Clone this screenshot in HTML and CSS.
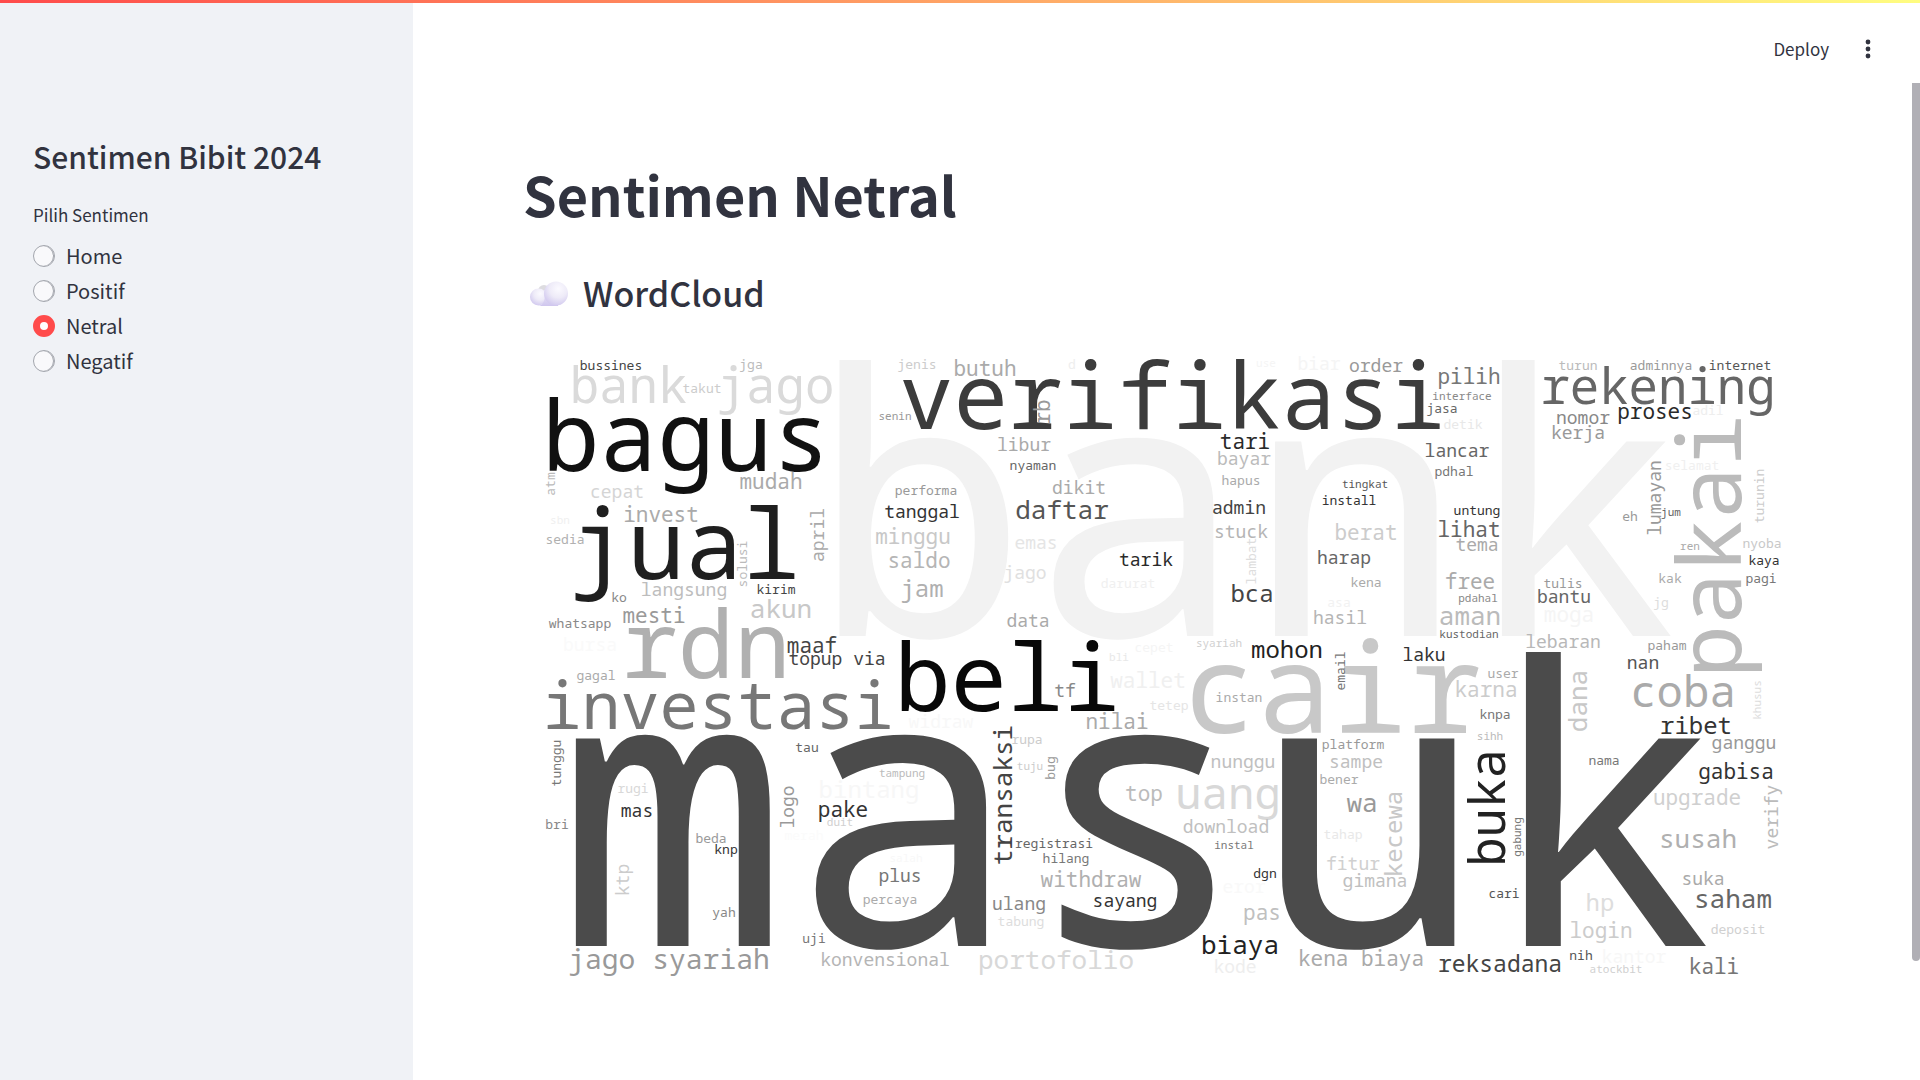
FILE: index.html
```html
<!DOCTYPE html>
<html lang="id">
<head>
<meta charset="utf-8">
<meta name="viewport" content="width=device-width, initial-scale=1">
<title>Sentimen Bibit 2024</title>
<link rel="stylesheet" href="styles.css">
</head>
<body>
<div class="decoration"></div>
<div class="app">
  <aside class="sidebar">
    <h2 class="sidebar-title">Sentimen Bibit 2024</h2>
    <fieldset class="options">
      <legend class="options-label">Pilih Sentimen</legend>
      <label class="option"><input class="radio" type="radio" name="sentimen"><span>Home</span></label>
      <label class="option"><input class="radio" type="radio" name="sentimen"><span>Positif</span></label>
      <label class="option"><input class="radio" type="radio" name="sentimen" checked><span>Netral</span></label>
      <label class="option"><input class="radio" type="radio" name="sentimen"><span>Negatif</span></label>
    </fieldset>
  </aside>
  <div class="view">
    <header class="toolbar">
      <button class="deploy" type="button">Deploy</button>
      <button class="menu" type="button" aria-label="Menu">
        <svg width="6" height="20" viewBox="0 0 6 20"><circle cx="3" cy="3" r="2.4"/><circle cx="3" cy="10" r="2.4"/><circle cx="3" cy="17" r="2.4"/></svg>
      </button>
    </header>
    <main class="content">
      <h1 class="title">Sentimen Netral</h1>
      <h3 class="subtitle">
        <svg class="cloud-icon" viewBox="0 0 38 25" aria-hidden="true">
          <defs>
            <linearGradient id="base" x1="0" y1="0" x2="0" y2="1"><stop offset="0" stop-color="#efecf8"/><stop offset="1" stop-color="#cfc6ee"/></linearGradient>
            <radialGradient id="puff" cx=".6" cy=".3" r=".75"><stop offset="0" stop-color="#fbfaff"/><stop offset=".5" stop-color="#eeebf8"/><stop offset="1" stop-color="#cfc6ee"/></radialGradient>
          </defs>
          <circle cx="14" cy="10" r="6" fill="#dddce0"/>
          <circle cx="8.5" cy="16" r="8.5" fill="url(#puff)"/>
          <path d="M14 9H28V25H9C14 24 16 17 14 9Z" fill="url(#base)"/>
          <circle cx="26" cy="12.5" r="12" fill="url(#puff)"/>
        </svg>
        <span>WordCloud</span>
      </h3>
      <svg class="wordcloud" viewBox="523 334 1287 660" role="img" aria-label="WordCloud Sentimen Netral">
        <text class="s363" x="1246" y="635" fill="#f2f2f2">bank</text>
        <text class="s387" x="1137" y="945" fill="#4b4b4b">masuk</text>
        <text class="s125" x="1332" y="732" fill="#c8c8c8">cair</text>
        <text class="s96" x="686" y="470" fill="#111">bagus</text>
        <text class="s96" x="685" y="578" fill="#1f1f1f">jual</text>
        <text class="s94" x="706" y="677" fill="#b0b0b0">rdn</text>
        <text class="s94" x="1007" y="710" fill="#080808">beli</text>
        <text class="s91" x="1172" y="428" fill="#3c3c3c">verifikasi</text>
        <text class="s88" x="1741" y="545" fill="#bbb" transform="rotate(-90 1741 545)">pakai</text>
        <text class="s65" x="718" y="728" fill="#777">investasi</text>
        <text class="s49" x="702" y="402" fill="#dadada">bank jago</text>
        <text class="s49" x="1658" y="403" fill="#666">rekening</text>
        <text class="s49" x="1505" y="807" fill="#222" transform="rotate(-90 1505 807)">buka</text>
        <text class="s44" x="1228" y="808" fill="#d8d8d8">uang</text>
        <text class="s44" x="1683" y="706" fill="#aaa">coba</text>
        <text class="s28" x="669" y="968" fill="#999">jago syariah</text>
        <text class="s13" x="611" y="369" fill="#444">bussines</text>
        <text class="s13" x="751" y="368" fill="#bbb">jga</text>
        <text class="s13" x="702" y="392" fill="#ccc">takut</text>
        <text class="s13" x="555" y="483" fill="#bbb" transform="rotate(-90 555 483)">atm</text>
        <text class="s18" x="617" y="497" fill="#d5d5d5">cepat</text>
        <text class="s21" x="771" y="488" fill="#aaa">mudah</text>
        <text class="s21" x="661" y="521" fill="#aaa">invest</text>
        <text class="s11" x="560" y="523" fill="#f0f0f0">sbn</text>
        <text class="s13" x="565" y="543" fill="#b0b0b0">sedia</text>
        <text class="s18" x="824" y="534" fill="#aaa" transform="rotate(-90 824 534)">april</text>
        <text class="s13" x="747" y="563" fill="#bbb" transform="rotate(-90 747 563)">solusi</text>
        <text class="s18" x="684" y="595" fill="#bdbdbd">langsung</text>
        <text class="s13" x="776" y="593" fill="#444">kirim</text>
        <text class="s13" x="619" y="601" fill="#888">ko</text>
        <text class="s21" x="654" y="622" fill="#999">mesti</text>
        <text class="s26" x="781" y="617" fill="#c8c8c8">akun</text>
        <text class="s13" x="580" y="627" fill="#888">whatsapp</text>
        <text class="s18" x="590" y="650" fill="#fafafa">bursa</text>
        <text class="s21" x="812" y="652" fill="#444">maaf</text>
        <text class="s18" x="837" y="664" fill="#444">topup via</text>
        <text class="s13" x="917" y="368" fill="#ccc">jenis</text>
        <text class="s21" x="985" y="375" fill="#aaa">butuh</text>
        <text class="s13" x="1072" y="368" fill="#eee">d</text>
        <text class="s11" x="895" y="419" fill="#999">senin</text>
        <text class="s21" x="1050" y="411" fill="#999" transform="rotate(-90 1050 411)">rb</text>
        <text class="s18" x="1024" y="450" fill="#aaa">libur</text>
        <text class="s13" x="1033" y="469" fill="#666">nyaman</text>
        <text class="s13" x="926" y="494" fill="#999">performa</text>
        <text class="s18" x="1079" y="493" fill="#aaa">dikit</text>
        <text class="s18" x="922" y="517" fill="#333">tanggal</text>
        <text class="s26" x="1062" y="518" fill="#555">daftar</text>
        <text class="s21" x="913" y="543" fill="#c8c8c8">minggu</text>
        <text class="s21" x="919" y="567" fill="#b5b5b5">saldo</text>
        <text class="s18" x="1036" y="548" fill="#e5e5e5">emas</text>
        <text class="s18" x="1146" y="565" fill="#2a2a2a">tarik</text>
        <text class="s24" x="922" y="596" fill="#b0b0b0">jam</text>
        <text class="s18" x="1025" y="578" fill="#e0e0e0">jago</text>
        <text class="s13" x="1128" y="587" fill="#f0f0f0">darurat</text>
        <text class="s18" x="1028" y="626" fill="#aaa">data</text>
        <text class="s13" x="1154" y="651" fill="#f5f5f5">cepet</text>
        <text class="s11" x="1119" y="660" fill="#e8e8e8">bli</text>
        <text class="s11" x="1266" y="366" fill="#f5f5f5">use</text>
        <text class="s18" x="1319" y="369" fill="#f5f5f5">biar</text>
        <text class="s18" x="1376" y="371" fill="#999">order</text>
        <text class="s21" x="1469" y="383" fill="#777">pilih</text>
        <text class="s11" x="1462" y="399" fill="#888">interface</text>
        <text class="s13" x="1442" y="412" fill="#666">jasa</text>
        <text class="s13" x="1463" y="428" fill="#e8e8e8">detik</text>
        <text class="s21" x="1245" y="448" fill="#2a2a2a">tari</text>
        <text class="s18" x="1244" y="464" fill="#bbb">bayar</text>
        <text class="s18" x="1457" y="456" fill="#666">lancar</text>
        <text class="s13" x="1241" y="484" fill="#aaa">hapus</text>
        <text class="s13" x="1454" y="475" fill="#777">pdhal</text>
        <text class="s11" x="1365" y="487" fill="#555">tingkat</text>
        <text class="s13" x="1349" y="504" fill="#333">install</text>
        <text class="s18" x="1239" y="513" fill="#444">admin</text>
        <text class="s13" x="1477" y="514" fill="#333">untung</text>
        <text class="s18" x="1241" y="537" fill="#b5b5b5">stuck</text>
        <text class="s21" x="1366" y="539" fill="#ccc">berat</text>
        <text class="s21" x="1469" y="536" fill="#666">lihat</text>
        <text class="s18" x="1477" y="550" fill="#aaa">tema</text>
        <text class="s18" x="1344" y="563" fill="#666">harap</text>
        <text class="s13" x="1256" y="560" fill="#ddd" transform="rotate(-90 1256 560)">lambat</text>
        <text class="s24" x="1252" y="601" fill="#444">bca</text>
        <text class="s13" x="1366" y="586" fill="#aaa">kena</text>
        <text class="s21" x="1470" y="588" fill="#aaa">free</text>
        <text class="s13" x="1339" y="606" fill="#f2f2f2">asa</text>
        <text class="s11" x="1478" y="601" fill="#888">pdahal</text>
        <text class="s18" x="1340" y="623" fill="#b5b5b5">hasil</text>
        <text class="s26" x="1470" y="624" fill="#bbb">aman</text>
        <text class="s11" x="1469" y="637" fill="#666">kustodian</text>
        <text class="s11" x="1219" y="646" fill="#d0d0d0">syariah</text>
        <text class="s24" x="1287" y="657" fill="#222">mohon</text>
        <text class="s18" x="1424" y="660" fill="#333">laku</text>
        <text class="s13" x="1345" y="670" fill="#777" transform="rotate(-90 1345 670)">email</text>
        <text class="s13" x="1578" y="369" fill="#bbb">turun</text>
        <text class="s13" x="1661" y="369" fill="#999">adminnya</text>
        <text class="s13" x="1740" y="369" fill="#555">internet</text>
        <text class="s18" x="1583" y="423" fill="#888">nomor</text>
        <text class="s21" x="1655" y="418" fill="#2a2a2a">proses</text>
        <text class="s13" x="1708" y="414" fill="#eee">adil</text>
        <text class="s18" x="1578" y="438" fill="#999">kerja</text>
        <text class="s13" x="1692" y="469" fill="#f0f0f0">selamat</text>
        <text class="s18" x="1661" y="497" fill="#999" transform="rotate(-90 1661 497)">lumayan</text>
        <text class="s13" x="1630" y="520" fill="#999">eh</text>
        <text class="s11" x="1671" y="515" fill="#666">jum</text>
        <text class="s13" x="1764" y="495" fill="#ccc" transform="rotate(-90 1764 495)">turunin</text>
        <text class="s13" x="1762" y="547" fill="#c8c8c8">nyoba</text>
        <text class="s11" x="1690" y="549" fill="#aaa">ren</text>
        <text class="s13" x="1764" y="564" fill="#333">kaya</text>
        <text class="s13" x="1670" y="582" fill="#aaa">kak</text>
        <text class="s13" x="1761" y="582" fill="#777">pagi</text>
        <text class="s13" x="1563" y="587" fill="#999">tulis</text>
        <text class="s18" x="1564" y="602" fill="#666">bantu</text>
        <text class="s13" x="1661" y="606" fill="#ddd">jg</text>
        <text class="s21" x="1569" y="621" fill="#f5f5f5">moga</text>
        <text class="s18" x="1563" y="647" fill="#b8b8b8">lebaran</text>
        <text class="s13" x="1667" y="649" fill="#999">paham</text>
        <text class="s18" x="1643" y="668" fill="#555">nan</text>
        <text class="s13" x="596" y="679" fill="#aaa">gagal</text>
        <text class="s13" x="561" y="762" fill="#777" transform="rotate(-90 561 762)">tunggu</text>
        <text class="s13" x="807" y="751" fill="#666">tau</text>
        <text class="s13" x="633" y="792" fill="#d8d8d8">rugi</text>
        <text class="s18" x="637" y="816" fill="#333">mas</text>
        <text class="s13" x="557" y="828" fill="#888">bri</text>
        <text class="s18" x="794" y="806" fill="#999" transform="rotate(-90 794 806)">logo</text>
        <text class="s13" x="711" y="842" fill="#999">beda</text>
        <text class="s13" x="726" y="853" fill="#333">knp</text>
        <text class="s18" x="629" y="879" fill="#ccc" transform="rotate(-90 629 879)">ktp</text>
        <text class="s24" x="869" y="797" fill="#f7f7f7">bintang</text>
        <text class="s21" x="843" y="816" fill="#333">pake</text>
        <text class="s11" x="840" y="825" fill="#d0d0d0">duit</text>
        <text class="s13" x="804" y="839" fill="#fbfbfb">merah</text>
        <text class="s13" x="724" y="916" fill="#888">yah</text>
        <text class="s13" x="814" y="942" fill="#777">uji</text>
        <text class="s18" x="885" y="965" fill="#b5b5b5">konvensional</text>
        <text class="s18" x="1065" y="696" fill="#888">tf</text>
        <text class="s21" x="1148" y="687" fill="#f0f0f0">wallet</text>
        <text class="s13" x="1169" y="709" fill="#e5e5e5">tetep</text>
        <text class="s18" x="941" y="727" fill="#f8f8f8">widraw</text>
        <text class="s21" x="1117" y="728" fill="#aaa">nilai</text>
        <text class="s26" x="1012" y="794" fill="#444" transform="rotate(-90 1012 794)">transaksi</text>
        <text class="s13" x="1027" y="743" fill="#ccc">rupa</text>
        <text class="s11" x="902" y="776" fill="#bbb">tampung</text>
        <text class="s11" x="1030" y="769" fill="#ccc">tuju</text>
        <text class="s13" x="1055" y="767" fill="#999" transform="rotate(-90 1055 767)">bug</text>
        <text class="s21" x="1144" y="800" fill="#bbb">top</text>
        <text class="s13" x="1054" y="847" fill="#666">registrasi</text>
        <text class="s13" x="1066" y="862" fill="#777">hilang</text>
        <text class="s21" x="1091" y="886" fill="#b0b0b0">withdraw</text>
        <text class="s11" x="906" y="861" fill="#f8f8f8">salah</text>
        <text class="s18" x="900" y="881" fill="#777">plus</text>
        <text class="s13" x="890" y="903" fill="#aaa">percaya</text>
        <text class="s18" x="1125" y="906" fill="#333">sayang</text>
        <text class="s18" x="1019" y="909" fill="#888">ulang</text>
        <text class="s13" x="1021" y="925" fill="#ddd">tabung</text>
        <text class="s26" x="1056" y="968" fill="#d8d8d8">portofolio</text>
        <text class="s13" x="1239" y="701" fill="#aaa">instan</text>
        <text class="s21" x="1486" y="696" fill="#ccc">karna</text>
        <text class="s13" x="1353" y="748" fill="#999">platform</text>
        <text class="s18" x="1243" y="767" fill="#c0c0c0">nunggu</text>
        <text class="s18" x="1356" y="767" fill="#c0c0c0">sampe</text>
        <text class="s13" x="1339" y="783" fill="#aaa">bener</text>
        <text class="s26" x="1362" y="811" fill="#999">wa</text>
        <text class="s24" x="1402" y="833" fill="#c8c8c8" transform="rotate(-90 1402 833)">kecewa</text>
        <text class="s18" x="1226" y="832" fill="#c0c0c0">download</text>
        <text class="s11" x="1234" y="848" fill="#777">instal</text>
        <text class="s13" x="1343" y="838" fill="#e8e8e8">tahap</text>
        <text class="s18" x="1353" y="869" fill="#d0d0d0">fitur</text>
        <text class="s18" x="1375" y="886" fill="#c0c0c0">gimana</text>
        <text class="s13" x="1265" y="877" fill="#333">dgn</text>
        <text class="s18" x="1244" y="892" fill="#f9f9f9">eror</text>
        <text class="s21" x="1262" y="919" fill="#c0c0c0">pas</text>
        <text class="s26" x="1240" y="953" fill="#222">biaya</text>
        <text class="s18" x="1235" y="972" fill="#eee">kode</text>
        <text class="s21" x="1361" y="965" fill="#aaa">kena biaya</text>
        <text class="s23" x="1500" y="971" fill="#444">reksadana</text>
        <text class="s13" x="1503" y="677" fill="#aaa">user</text>
        <text class="s13" x="1495" y="718" fill="#777">knpa</text>
        <text class="s11" x="1490" y="739" fill="#bbb">sihh</text>
        <text class="s13" x="1504" y="897" fill="#555">cari</text>
        <text class="s11" x="1521" y="836" fill="#777" transform="rotate(-90 1521 836)">gabung</text>
        <text class="s26" x="1587" y="700" fill="#c8c8c8" transform="rotate(-90 1587 700)">dana</text>
        <text class="s11" x="1761" y="699" fill="#ddd" transform="rotate(-90 1761 699)">khusus</text>
        <text class="s24" x="1696" y="733" fill="#333">ribet</text>
        <text class="s13" x="1604" y="764" fill="#777">nama</text>
        <text class="s18" x="1744" y="748" fill="#999">ganggu</text>
        <text class="s21" x="1736" y="778" fill="#333">gabisa</text>
        <text class="s21" x="1697" y="804" fill="#d0d0d0">upgrade</text>
        <text class="s18" x="1778" y="816" fill="#bbb" transform="rotate(-90 1778 816)">verify</text>
        <text class="s26" x="1698" y="847" fill="#b0b0b0">susah</text>
        <text class="s18" x="1703" y="884" fill="#aaa">suka</text>
        <text class="s26" x="1733" y="907" fill="#666">saham</text>
        <text class="s24" x="1600" y="910" fill="#ddd">hp</text>
        <text class="s21" x="1601" y="937" fill="#ccc">login</text>
        <text class="s13" x="1738" y="933" fill="#d0d0d0">deposit</text>
        <text class="s13" x="1581" y="959" fill="#555">nih</text>
        <text class="s18" x="1634" y="962" fill="#f7f7f7">kantor</text>
        <text class="s11" x="1616" y="972" fill="#d0d0d0">atockbit</text>
        <text class="s21" x="1714" y="973" fill="#777">kali</text>
      </svg>
    </main>
    <div class="scroll-thumb"></div>
  </div>
</div>
</body>
</html>
```
FILE: styles.css
```css
* { box-sizing: border-box; }

body {
  margin: 0;
  color: #31333f;
  background: #fff;
  font-family: "Noto Sans CJK SC", "Noto Sans", sans-serif;
}

.decoration {
  position: absolute;
  top: 0;
  left: 0;
  right: 0;
  height: 3px;
  background: linear-gradient(90deg, #ff4b4b, #fffd80);
  z-index: 2;
}

.app {
  display: flex;
  height: 100vh;
  overflow: hidden;
}

.sidebar {
  flex: 0 0 413px;
  padding: 132px 33px 32px;
  background: #f0f2f6;
}

.sidebar-title {
  margin: 0 0 25px;
  font-size: 30px;
  line-height: 48px;
  font-weight: 500;
}

.options {
  display: flex;
  flex-direction: column;
  margin: 0;
  padding: 0;
  border: 0;
}

.options-label {
  margin: 0 0 13px;
  padding: 0;
  font-size: 17px;
  line-height: 20px;
  height: 20px;
}

.option {
  display: flex;
  align-items: center;
  gap: 11px;
  height: 35px;
  font-size: 20px;
  line-height: 32px;
}

.radio {
  appearance: none;
  width: 22px;
  height: 22px;
  margin: 0;
  border-radius: 50%;
  background: #f9f9fb;
  border: 1px solid #a3a6ad;
  box-shadow: inset -1px 0 0 #a3a6ad;
}

.radio:checked {
  border: 7px solid #ff4b4b;
  background: #fff;
  box-shadow: none;
}

.view {
  position: relative;
  flex: 1;
  min-width: 0;
}

.toolbar {
  display: flex;
  align-items: center;
  justify-content: flex-end;
  gap: 28px;
  height: 83px;
  padding: 15px 41px 0 0;
}

.deploy, .menu {
  display: flex;
  align-items: center;
  justify-content: center;
  padding: 0;
  border: 0;
  background: none;
  color: #31333f;
  font: inherit;
  font-size: 17px;
  line-height: 28px;
}

.menu {
  width: 22px;
  height: 28px;
  fill: #31333f;
}

.content {
  padding: 75px 110px 0;
}

.title {
  margin: 0 0 40px;
  font-size: 54px;
  line-height: 72px;
  font-weight: 700;
}

.subtitle {
  display: flex;
  align-items: center;
  gap: 15px;
  margin: 0 0 19px;
  padding-left: 7px;
  font-size: 34px;
  line-height: 46px;
  font-weight: 500;
}

.cloud-icon {
  width: 38px;
  height: 25px;
}

.wordcloud {
  display: block;
  width: 100%;
  font-family: "Droid Sans Mono", "Noto Sans Mono", "Liberation Mono", monospace;
  text-anchor: middle;
}

.s11 { font-size: 11px; }
.s13 { font-size: 13px; }
.s18 { font-size: 18px; }
.s21 { font-size: 21px; }
.s23 { font-size: 23px; }
.s24 { font-size: 24px; }
.s26 { font-size: 26px; }
.s28 { font-size: 28px; }
.s44 { font-size: 44px; }
.s49 { font-size: 49px; }
.s65 { font-size: 65px; }
.s88 { font-size: 88px; }
.s91 { font-size: 91px; }
.s94 { font-size: 94px; }
.s96 { font-size: 96px; }
.s125 { font-size: 125px; }
.s363 { font-size: 363px; }
.s387 { font-size: 387px; }

.scroll-thumb {
  position: absolute;
  top: 83px;
  right: 0;
  width: 8px;
  height: 878px;
  border-radius: 0 0 4px 4px;
  background: #b0afb5;
}
```
